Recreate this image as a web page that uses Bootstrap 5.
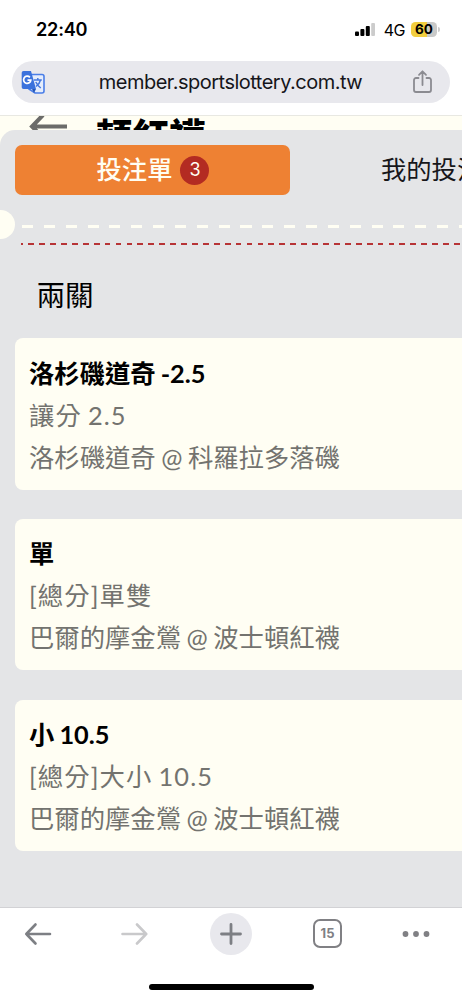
<!DOCTYPE html>
<html lang="zh-Hant">
<head>
<meta charset="utf-8">
<meta name="viewport" content="width=device-width, initial-scale=1">
<title>投注單</title>
<link href="https://cdn.jsdelivr.net/npm/bootstrap@5.3.0/dist/css/bootstrap.min.css" rel="stylesheet">
<style>
body{width:462px;height:1000px;background:#fff;color:#000;font-family:Lato,"Noto Sans CJK TC",sans-serif;line-height:1}
.ui{font-family:Inter,"Liberation Sans",sans-serif}
svg{display:block;flex:none}
.status{height:61px;padding:1px 22px 3px 36px}
.clock{font-size:18.2px;font-weight:600;letter-spacing:-.25px}
.net{font-size:16px;font-weight:400;letter-spacing:-.5px;margin:0 6px 0 9px}
.battery{width:26px;height:15px;border-radius:4.5px;background:linear-gradient(90deg,#f1ce3f 62%,#c9c9c8 62%);font-size:13.5px;font-weight:700}
.cap{width:2px;height:5px;background:#ccc;border-radius:0 2px 2px 0;margin-left:1px}
.address{height:42px;margin:0 12px;background:#e8e8ed;padding:0 17px 0 9px}
.url{font-size:20px;letter-spacing:-.5px;color:#15151a;margin:-1px 0 0 4px}
.page{height:792px;margin-top:12px;background:#fffef3;border-top:1px solid #e8e8e2}
.topbar{height:14px;padding-left:29px}
.topbar h1{font-size:36.5px;line-height:36px;font-weight:900;margin:2px 0 0 28px}
.slip{height:777px;background:#e4e5e7;border-top-left-radius:15px;padding-top:15px}
.tabs{height:50px;padding-left:15px;font-size:25.3px}
.tab-on{width:275px;background:#ee8133;color:#fffef3;border-radius:7px;font-weight:500;padding-left:1px}
.count{width:29px;height:29px;background:#b32b22;font-size:18px;margin-left:8px;font-weight:400}
.tab-off{padding-left:91px;white-space:nowrap;color:#17171a}
.tear{height:29px;margin-top:15px}
.notch{width:15px;height:29px;background:#fffef3;border-radius:0 15px 15px 0}
.perf{height:3px;margin:3px 0 0 7px;background:repeating-linear-gradient(90deg,#fffef3 0 11px,transparent 11px 21.85px)}
.redline{height:2px;margin:4px 0 0 17px;background:repeating-linear-gradient(90deg,transparent 0 .3px,#b73436 .3px 6.1px,transparent 6.1px 10.92px);clip-path:inset(0 0 0 4px)}
.combo{font-size:28.6px;line-height:40px;font-weight:400;margin:30px 0 23px 36.5px}
.bet{height:151.5px;margin:0 0 29.3px 15px;padding:13.5px 0 0 14px;background:#fffef3;border-radius:8px 0 0 8px;white-space:nowrap;font-size:25.35px;line-height:42px;word-spacing:-1px}
.bet h3{font-size:25.3px;line-height:42px;font-weight:700;margin:0}
.bet p{margin:0;color:#73736f;height:42px}
.bet .kind{letter-spacing:1.1px;word-spacing:-1.5px}
.tools{height:52px;border-top:1px solid #d2d2d5;padding:0 32px 0 23.5px}
.plus{width:42px;height:42px;background:#e8e8ed;margin:0 61px 0 62px}
.forward{margin-left:68.5px}
.pages{width:29px;height:29px;border:2.5px solid #808084;border-radius:7px;color:#808084;font-size:13px;font-weight:700}
.home{width:165px;height:6px;background:#000;margin-top:25px}
</style>
</head>
<body class="overflow-hidden">
<header>
  <div class="status ui d-flex align-items-center">
    <span class="clock me-auto">22:40</span>
    <svg class="ms-2" width="20" height="15" viewBox="0 0 20 15"><g><rect x="0" y="9.5" width="4" height="4.5" rx="1"/><rect x="5.4" y="7" width="4" height="7" rx="1"/><rect x="10.8" y="4" width="4" height="10" rx="1"/><rect x="16.2" y="1" width="3.8" height="13" rx="1" fill="#ccc"/></g></svg>
    <span class="net">4G</span>
    <span class="battery d-flex align-items-center justify-content-center">60</span><span class="cap"></span>
  </div>
  <div class="address ui rounded-pill d-flex align-items-center justify-content-between">
    <svg width="24" height="24" viewBox="0 0 24 24"><path d="M10 4.500h11a2 2 0 0 1 2 2V21a2 2 0 0 1-2 2h-7L8 19z" fill="#e5edfc" stroke="#4a7ee8" stroke-width="1.600"/><path d="M2.500 1H10l5 18H2.500A1.800 1.800 0 0 1 .7 17.200V2.800A1.800 1.800 0 0 1 2.500 1z" fill="#3b72dc"/><path d="M11 19h4l-2 4z" fill="#2557b7"/><path d="M8.900 7.400a3.600 3.600 0 1 0 .9 2.700H6.500" fill="none" stroke="#fff" stroke-width="1.700"/><path d="M12.800 10h8M16.800 8v2M19.500 10c-.7 3-2.400 5-4.500 6.500M14.800 12c1 2.200 3 4.500 5 6" fill="none" stroke="#4579df" stroke-width="1.500"/></svg>
    <span class="url">member.sportslottery.com.tw</span>
    <svg width="21" height="24" viewBox="0 0 21 24" fill="none" stroke="#8b8b91" stroke-width="1.800" stroke-linecap="round" stroke-linejoin="round"><path d="M6.500 8H4a2 2 0 0 0-2 2v10a2 2 0 0 0 2 2h13a2 2 0 0 0 2-2V10a2 2 0 0 0-2-2h-2.500M10.500 15V1.500M7 4.800l3.500-3.500L14 4.800"/></svg>
  </div>
</header>
<main class="page overflow-hidden">
  <div class="topbar d-flex align-items-start overflow-hidden">
    <svg width="39" height="22" viewBox="0 0 39 22" fill="none" stroke="#6b6b69" stroke-width="4"><path d="M38 10.500H2M14 -1L3 10.500l11 11"/></svg>
    <h1>頓紅襪</h1>
  </div>
  <section class="slip overflow-hidden">
    <nav class="tabs d-flex">
      <div class="tab-on d-flex flex-shrink-0 align-items-center justify-content-center">投注單<span class="count ui rounded-circle d-flex align-items-center justify-content-center">3</span></div>
      <div class="tab-off d-flex align-items-center">我的投注</div>
    </nav>
    <div class="tear d-flex align-items-center"><div class="notch"></div><div class="perf flex-grow-1"></div></div>
    <div class="redline"></div>
    <h2 class="combo">兩關</h2>
    <article class="bet"><h3>洛杉磯道奇 -2.5</h3><p class="kind">讓分 2.5</p><p>洛杉磯道奇 @ 科羅拉多落磯</p></article>
    <article class="bet"><h3>單</h3><p class="kind">[總分]單雙</p><p>巴爾的摩金鶯 @ 波士頓紅襪</p></article>
    <article class="bet"><h3>小 10.5</h3><p class="kind">[總分]大小 10.5</p><p>巴爾的摩金鶯 @ 波士頓紅襪</p></article>
  </section>
</main>
<footer>
  <nav class="tools ui d-flex align-items-center">
    <svg width="28" height="24" viewBox="0 0 28 24" fill="none" stroke="#7d7f84" stroke-width="2.600" stroke-linecap="round" stroke-linejoin="round"><path d="M26 12H2.300M11.500 2.500L2.300 12l9.200 9.500"/></svg>
    <svg class="forward" width="28" height="24" viewBox="0 0 28 24" fill="none" stroke="#c9c9cb" stroke-width="2.600" stroke-linecap="round" stroke-linejoin="round"><path d="M2.500 12h23.700M17 2.500l9.200 9.500L17 21.500"/></svg>
    <div class="plus rounded-circle d-flex align-items-center justify-content-center"><svg width="24" height="24" viewBox="0 0 24 24" stroke="#7d7f84" stroke-width="2.800" stroke-linecap="round"><path d="M12 2.500v19M2.500 12h19"/></svg></div>
    <div class="pages d-flex align-items-center justify-content-center">15</div>
    <svg class="ms-auto" width="28" height="8" viewBox="0 0 28 8" fill="#808084"><circle cx="3.500" cy="4" r="2.900"/><circle cx="14" cy="4" r="2.900"/><circle cx="24.500" cy="4" r="2.900"/></svg>
  </nav>
  <div class="home rounded-pill mx-auto"></div>
</footer>
<script src="https://cdn.jsdelivr.net/npm/bootstrap@5.3.0/dist/js/bootstrap.bundle.min.js"></script>
</body>
</html>
